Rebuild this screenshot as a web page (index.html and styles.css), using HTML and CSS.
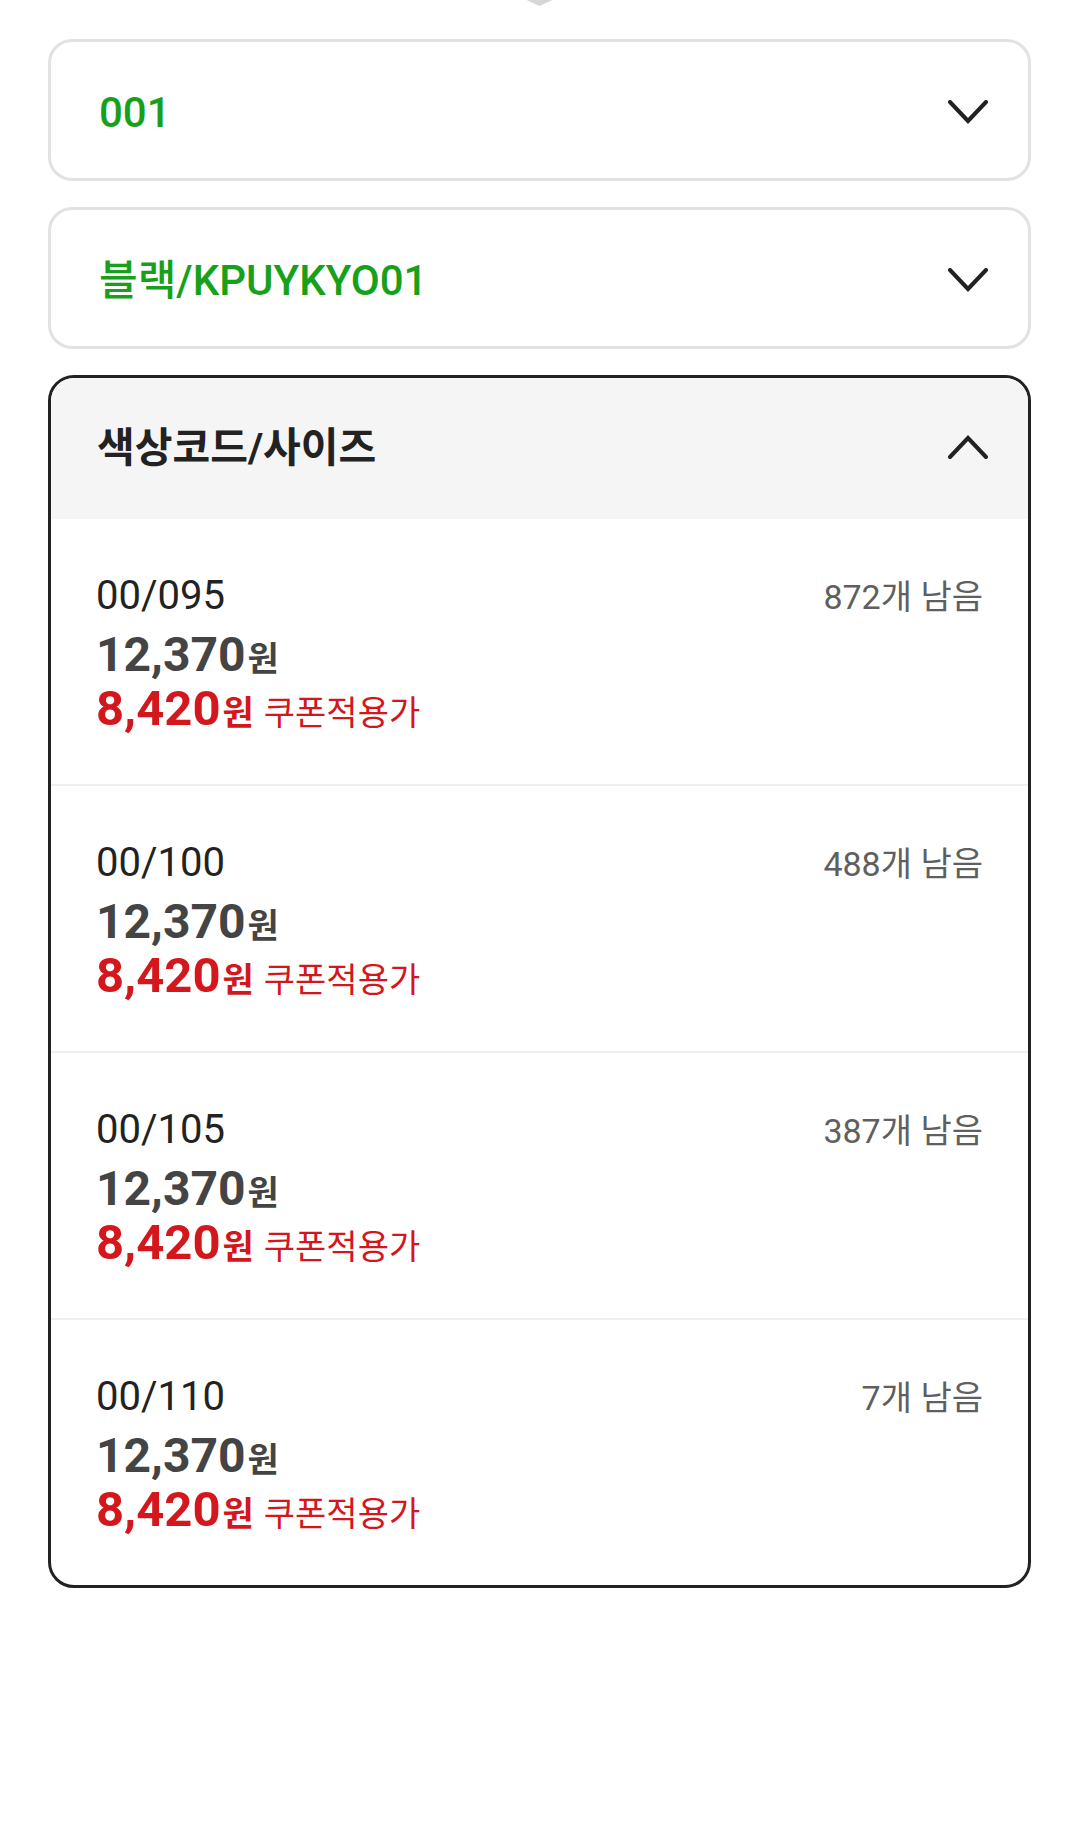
FILE: index.html
```html
<!DOCTYPE html>
<html lang="ko">
<head>
    <meta name="viewport" content="width=device-width, initial-scale=1.0">
    <meta charset="UTF-8">
    <title>옵션 선택</title>
    <link rel="stylesheet" href="styles.css">
</head>
<body>
<main class="option_page">
    <div class="handle"></div>

    <div class="select_box">
        <span class="select_value">001</span>
        <svg class="chevron" viewBox="0 0 40 24"><path d="M2 2 L20 21 L38 2"/></svg>
    </div>

    <div class="select_box">
        <span class="select_value">블랙/KPUYKYO01</span>
        <svg class="chevron" viewBox="0 0 40 24"><path d="M2 2 L20 21 L38 2"/></svg>
    </div>

    <div class="option_list">
        <div class="list_head">
            <span class="list_title">색상코드/사이즈</span>
            <svg class="chevron" viewBox="0 0 40 24"><path d="M2 22 L20 3 L38 22"/></svg>
        </div>

        <div class="item">
            <div class="item_top">
                <span class="item_code">00/095</span>
                <span class="item_stock">872개 남음</span>
            </div>
            <div class="item_price">12,370<small>원</small></div>
            <div class="item_sale">8,420<small>원</small><span class="coupon">쿠폰적용가</span></div>
        </div>

        <div class="item">
            <div class="item_top">
                <span class="item_code">00/100</span>
                <span class="item_stock">488개 남음</span>
            </div>
            <div class="item_price">12,370<small>원</small></div>
            <div class="item_sale">8,420<small>원</small><span class="coupon">쿠폰적용가</span></div>
        </div>

        <div class="item">
            <div class="item_top">
                <span class="item_code">00/105</span>
                <span class="item_stock">387개 남음</span>
            </div>
            <div class="item_price">12,370<small>원</small></div>
            <div class="item_sale">8,420<small>원</small><span class="coupon">쿠폰적용가</span></div>
        </div>

        <div class="item">
            <div class="item_top">
                <span class="item_code">00/110</span>
                <span class="item_stock">7개 남음</span>
            </div>
            <div class="item_price">12,370<small>원</small></div>
            <div class="item_sale">8,420<small>원</small><span class="coupon">쿠폰적용가</span></div>
        </div>
    </div>
</main>
</body>
</html>
```

FILE: styles.css
```css
:root {
    --green: #17a01a;
    --dark: #222222;
    --price: #444444;
    --red: #d3171c;
    --gray-txt: #5f5f5f;
    --line: #e2e2e2;
    --head-bg: #f5f5f5;
}

* {
    margin: 0;
    padding: 0;
    box-sizing: border-box;
    font-family: Roboto, "Noto Sans CJK KR", sans-serif;
}

body {
    background: #ffffff;
}

.option_page {
    padding: 0 49px 200px 48px;
}

/* little grey tab peeking at the top */
.handle {
    width: 26px;
    height: 6px;
    margin: 0 auto 33px;
    background: #d6d6d6;
    clip-path: polygon(0 0, 100% 0, 50% 100%);
}

.select_box {
    height: 142px;
    border: 3px solid var(--line);
    border-radius: 24px;
    display: flex;
    align-items: center;
    justify-content: space-between;
    padding: 0 40px 0 48px;
    margin-bottom: 26px;
}

.select_box .chevron {
    margin-top: 4px;
}

.select_value {
    color: var(--green);
    font-size: 42px;
    font-weight: 500;
    line-height: 1;
    padding-top: 6px;
}

.chevron {
    width: 40px;
    height: 24px;
    fill: none;
    stroke: var(--dark);
    stroke-width: 4;
    stroke-linecap: round;
    stroke-linejoin: miter;
}

.option_list {
    border: 3px solid var(--dark);
    border-radius: 26px;
    overflow: hidden;
}

.list_head {
    height: 141px;
    background: var(--head-bg);
    display: flex;
    align-items: center;
    justify-content: space-between;
    padding: 0 40px 0 46px;
}

.list_head .chevron {
    margin-top: -3px;
}

.list_title {
    font-size: 41px;
    font-weight: 700;
    color: var(--dark);
    line-height: 1;
}

.item {
    padding: 53px 45px 49px 45px;
    border-top: 2px solid #efefef;
}

.list_head + .item {
    border-top: none;
}

.item_top {
    display: flex;
    justify-content: space-between;
    align-items: baseline;
    height: 48px;
}

.item_code {
    font-size: 40px;
    color: var(--dark);
    line-height: 48px;
}

.item_stock {
    font-size: 34px;
    color: var(--gray-txt);
    line-height: 48px;
}

.item_price {
    margin-top: 7px;
    font-size: 48px;
    font-weight: 700;
    color: var(--price);
    line-height: 56px;
    height: 56px;
}

.item_sale {
    font-size: 49px;
    font-weight: 700;
    color: var(--red);
    line-height: 52px;
    height: 52px;
}

.item_price small,
.item_sale small {
    font-size: 34px;
    font-weight: 700;
    line-height: 1;
    margin-left: 2px;
}

.coupon {
    font-size: 34px;
    font-weight: 400;
    line-height: 1;
    margin-left: 10px;
}
```
